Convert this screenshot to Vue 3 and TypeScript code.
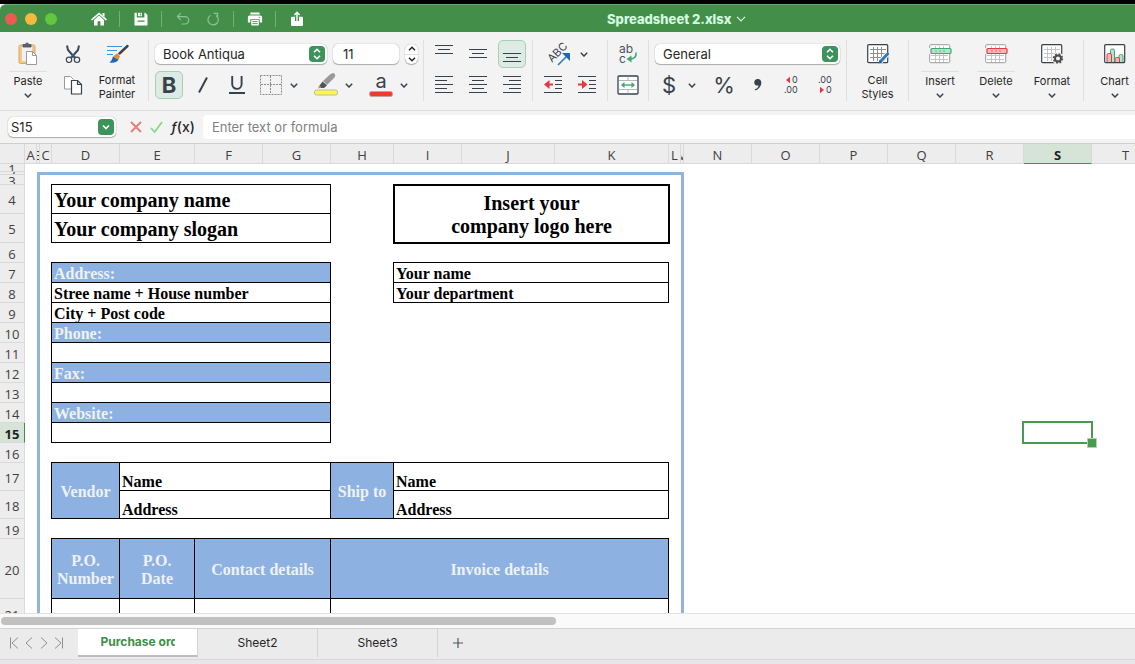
<script setup lang="ts">
import { ref } from 'vue'

interface Cell {
  text?: string
  span?: number
  rows?: number
  kind?: string
}
interface Row {
  n: number
  h: number
  cells: Cell[]
}

const columns: { id: string; w: number }[] = [
  { id: 'A', w: 12 },
  { id: 'B', w: 3 },
  { id: 'C', w: 12 },
  { id: 'D', w: 68 },
  { id: 'E', w: 75 },
  { id: 'F', w: 68 },
  { id: 'G', w: 68 },
  { id: 'H', w: 63 },
  { id: 'I', w: 68 },
  { id: 'J', w: 93 },
  { id: 'K', w: 114 },
  { id: 'L', w: 12 },
  { id: 'M', w: 3 },
  { id: 'N', w: 68 },
  { id: 'O', w: 68 },
  { id: 'P', w: 68 },
  { id: 'Q', w: 68 },
  { id: 'R', w: 68 },
  { id: 'S', w: 68 },
  { id: 'T', w: 68 },
]
const outer = ['N', 'O', 'P', 'Q', 'R', 'S', 'T']
const tableWidth = 25 + columns.reduce((sum, c) => sum + c.w, 0)

const gap: Cell = {}
const empty: Cell = { span: 8 }
const left = (text: string, kind = 'box'): Cell => ({ text, span: 4, kind })
const rest: Cell = { span: 4 }

const rows: Row[] = [
  { n: 1, h: 8, cells: [empty] },
  { n: 2, h: 3, cells: [] },
  { n: 3, h: 10, cells: [empty] },
  {
    n: 4,
    h: 29,
    cells: [
      left('Your company name', 'box large'),
      gap,
      { text: 'Insert your\ncompany logo here', span: 3, rows: 2, kind: 'logo large' },
    ],
  },
  { n: 5, h: 29, cells: [left('Your company slogan', 'box large'), gap] },
  { n: 6, h: 20, cells: [empty] },
  { n: 7, h: 20, cells: [left('Address:', 'box fill'), gap, { text: 'Your name', span: 3, kind: 'box' }] },
  { n: 8, h: 20, cells: [left('Stree name + House number'), gap, { text: 'Your department', span: 3, kind: 'box' }] },
  { n: 9, h: 20, cells: [left('City + Post code'), rest] },
  { n: 10, h: 20, cells: [left('Phone:', 'box fill'), rest] },
  { n: 11, h: 20, cells: [left(''), rest] },
  { n: 12, h: 20, cells: [left('Fax:', 'box fill'), rest] },
  { n: 13, h: 20, cells: [left(''), rest] },
  { n: 14, h: 20, cells: [left('Website:', 'box fill'), rest] },
  { n: 15, h: 20, cells: [left(''), rest] },
  { n: 16, h: 20, cells: [empty] },
  {
    n: 17,
    h: 28,
    cells: [
      { text: 'Vendor', rows: 2, kind: 'box fill mid' },
      { text: 'Name', span: 3, kind: 'box low' },
      { text: 'Ship to', rows: 2, kind: 'box fill mid' },
      { text: 'Name', span: 3, kind: 'box low' },
    ],
  },
  {
    n: 18,
    h: 28,
    cells: [
      { text: 'Address', span: 3, kind: 'box low' },
      { text: 'Address', span: 3, kind: 'box low' },
    ],
  },
  { n: 19, h: 20, cells: [empty] },
  {
    n: 20,
    h: 60,
    cells: [
      { text: 'P.O.\nNumber', kind: 'box fill mid' },
      { text: 'P.O.\nDate', kind: 'box fill mid' },
      { text: 'Contact details', span: 2, kind: 'box fill mid' },
      { text: 'Invoice details', span: 4, kind: 'box fill mid' },
    ],
  },
  { n: 21, h: 30, cells: [{ kind: 'box' }, { kind: 'box' }, { span: 2, kind: 'box' }, { span: 4, kind: 'box' }] },
]

const font = ref('Book Antiqua')
const size = ref('11')
const format = ref('General')
const address = ref('S15')
const formula = ref('')
const sheets = ['Purchase order', 'Sheet2', 'Sheet3']
const current = ref(0)
</script>

<template>
  <div class="app">
    <header class="titlebar">
      <div class="lights">
        <button class="light red" aria-label="Close"></button>
        <button class="light amber" aria-label="Minimize"></button>
        <button class="light green" aria-label="Zoom"></button>
      </div>
      <nav class="quick">
        <button aria-label="Home">
          <svg width="16" height="14" viewBox="0 0 16 14">
            <path d="M1 7.6 8 1.4l7 6.2" fill="none" stroke="#fff" stroke-width="1.5" stroke-linecap="round" />
            <path d="M11.5 1h2v4l-2-1.6zM3 8l5-4.4L13 8v5.4H9.4V9.2H6.6v4.2H3z" fill="#fff" />
          </svg>
        </button>
        <i></i>
        <button aria-label="Save">
          <svg width="14" height="14" viewBox="0 0 14 14">
            <path d="M0.5 0.8h2.3v4.6h7.6V0.8h0.8L13.5 3v10.5h-13z" fill="#fff" />
            <path d="M4 0.8h4v3.4H4z" fill="#fff" />
            <path d="M3.4 8.6h7.2v1.2H3.4zM6 10h5M6.2 1.5h1v2h-1z" fill="#438f4a" />
          </svg>
        </button>
        <i></i>
        <button aria-label="Undo">
          <svg width="14" height="14" viewBox="0 0 14 14" fill="none" stroke="#8fc294" stroke-width="1.2">
            <path d="M4.8 1.2 1.4 4.6 4.8 8M1.6 4.6H9a3.6 3.6 0 0 1 0 7.4H5.5" />
          </svg>
        </button>
        <button aria-label="Redo">
          <svg width="14" height="14" viewBox="0 0 14 14" fill="none" stroke="#8fc294" stroke-width="1.2">
            <path d="M4.6 3.2A5.2 5.2 0 1 0 10 3.4M7.6 1.4h4v4" />
          </svg>
        </button>
        <i></i>
        <button aria-label="Print">
          <svg width="16" height="14" viewBox="0 0 16 14">
            <path
              d="M3.4 0.6h9.2v2H3.4zM2.4 3.6h11.2a1.5 1.5 0 0 1 1.5 1.5v5.4h-2.4V7.2H3.3v3.3H0.9V5.1a1.5 1.5 0 0 1 1.5-1.5z"
              fill="#fff"
            />
            <rect x="4.2" y="8" width="7.6" height="5.4" rx="0.6" fill="#fff" />
            <path d="M5.4 9.6h5.2M5.4 11.6h5.2M11.8 5.4h1.4" stroke="#438f4a" stroke-width="0.9" />
          </svg>
        </button>
        <i></i>
        <button aria-label="Share">
          <svg width="14" height="16" viewBox="0 0 14 16">
            <path d="M2 5.8h10a1 1 0 0 1 1 1V14a1 1 0 0 1-1 1H2a1 1 0 0 1-1-1V6.8a1 1 0 0 1 1-1z" fill="#fff" />
            <path d="M5 5.6h4V10H5z" fill="#438f4a" />
            <path d="M7 10.4V1.6M4.4 4 7 1.3 9.6 4" fill="none" stroke="#fff" stroke-width="1.4" />
          </svg>
        </button>
      </nav>
      <button class="doc">
        <span>Spreadsheet 2.xlsx</span>
        <svg width="10" height="6" viewBox="0 0 10 6"><path d="M1 0.8 5 5 9 0.8" fill="none" stroke="#d9f5e0" stroke-width="1.2" /></svg>
      </button>
    </header>

    <div class="ribbon">
      <div class="group clip">
        <button class="big">
          <span class="pic lined">
            <svg width="20" height="24" viewBox="0 0 20 24">
              <rect x="1" y="3" width="16" height="18.5" rx="1.5" fill="#f3c88f" stroke="#d9a562" />
              <rect x="4" y="5" width="10" height="14" fill="#f1f1f1" />
              <path d="M5 5V2.5h2.5a1.5 1.5 0 0 1 3 0H13V5z" fill="#5a646b" stroke="#47525a" stroke-width="0.8" />
              <path d="M8.5 9.5h6l4 4v9h-10z" fill="#fff" stroke="#9a9a9a" />
              <path d="M14.5 9.5v4h4" fill="none" stroke="#9a9a9a" />
            </svg>
          </span>
          <span>Paste</span>
          <svg class="down" width="8" height="5" viewBox="0 0 8 5"><path d="M0.8 0.8 4 4 7.2 0.8" /></svg>
        </button>
        <div class="stack">
          <button class="tool" aria-label="Cut">
            <svg width="16" height="20" viewBox="0 0 16 20" fill="none">
              <path d="M2 1.5 3 6l7.500 8.500M14 1.500 13 6l-7.500 8.500" stroke="#3d4852" stroke-width="2" />
              <path d="M8 10.500 4.500 14M8 10.500l3.500 3.500" stroke="#2f78c2" stroke-width="1" />
              <circle cx="4" cy="15.800" r="2.700" stroke="#3d4852" stroke-width="1.200" fill="#f3f3f3" />
              <circle cx="12" cy="15.800" r="2.700" stroke="#3d4852" stroke-width="1.200" fill="#f3f3f3" />
            </svg>
          </button>
          <button class="tool" aria-label="Copy">
            <svg width="20" height="20" viewBox="0 0 20 20">
              <path d="M1.500 1.500h6l3 3v9.500h-9z" fill="#fff" stroke="#9a9a9a" />
              <path d="M8.500 5.500h6l4 4v9.500h-10z" fill="#fff" stroke="#37424d" stroke-width="1.200" />
              <path d="M14.500 5.500v4h4" fill="none" stroke="#37424d" stroke-width="1.200" />
            </svg>
          </button>
        </div>
        <button class="big">
          <span class="pic">
            <svg width="23" height="20" viewBox="0 0 23 20">
              <path d="M1 2.500h15M1 6.500h10M1 10.500h6" stroke="#3b93d6" stroke-width="1" />
              <path d="m13.500 9.500 8-7.500" stroke="#37424d" stroke-width="2.400" stroke-linecap="round" />
              <path d="M7 12.500 11 9.200l3 3-1.500 3.600z" fill="#ef8a2f" />
              <path d="M7 12.500c-0.800 2.500-1.500 4.500-3.500 6 4 0.600 7.500 0 9-2.700z" fill="#1f66b5" />
            </svg>
          </span>
          <span>Format Painter</span>
        </button>
      </div>

      <div class="group stack type">
        <div class="line">
          <label class="combo fontbox">
            <select v-model="font" aria-label="Font"><option>Book Antiqua</option></select>
            <svg class="knob" width="16" height="16" viewBox="0 0 16 16"><path d="M5 6.300 8 3.300l3 3M5 9.700l3 3 3-3" /></svg>
          </label>
          <input v-model="size" class="size" type="text" aria-label="Font size" />
          <div class="stepper">
            <button aria-label="Larger"><svg width="8" height="5" viewBox="0 0 8 5"><path d="M1 4.200 4 1.200l3 3" /></svg></button>
            <button aria-label="Smaller"><svg width="8" height="5" viewBox="0 0 8 5"><path d="M1 0.800l3 3 3-3" /></svg></button>
          </div>
        </div>
        <div class="line">
          <button class="tool on glyph bold">B</button>
          <button class="tool" aria-label="Italic">
            <svg width="12" height="18" viewBox="0 0 12 18"><path d="M10 1.500 2 16.500" stroke="#37424d" stroke-width="2" /></svg>
          </button>
          <button class="tool" aria-label="Underline">
            <svg width="18" height="20" viewBox="0 0 18 20" fill="none" stroke="#37424d" stroke-width="1.900">
              <path d="M4.200 1v8.200a4.700 4.700 0 0 0 9.400 0V1M1 18h16" />
            </svg>
          </button>
          <div class="split">
            <button class="tool" aria-label="Borders">
              <svg width="22" height="20" viewBox="0 0 22 20" fill="none" stroke="#8c8c8c" stroke-dasharray="2 1">
                <path d="M0.500 0.500h21v19H0.500zM10.500 1v18M1 9.500h20" />
              </svg>
            </button>
            <button class="more" aria-label="More borders"><svg class="down" width="8" height="5" viewBox="0 0 8 5"><path d="M0.800 0.800 4 4 7.200 0.800" /></svg></button>
          </div>
          <div class="split">
            <button class="tool" aria-label="Highlight">
              <svg width="26" height="26" viewBox="0 0 26 26">
                <path d="m10 9 7-6.500q4-3 5 0 0.500 2-1 3.500l-7 7z" fill="#999" />
                <path d="m9.500 9.500 4.500 4-3 2.500H6.500l-1-1z" fill="#4a545c" />
                <path d="m6.500 13.500 2 2-3.500 1z" fill="#ef8a2f" />
                <rect x="1.500" y="18" width="23" height="5" rx="2" fill="#fff748" stroke="#b9b9b9" />
              </svg>
            </button>
            <button class="more" aria-label="Highlight colours"><svg class="down" width="8" height="5" viewBox="0 0 8 5"><path d="M0.800 0.800 4 4 7.200 0.800" /></svg></button>
          </div>
          <div class="split">
            <button class="tool inked" aria-label="Font colour">
              <span>a</span>
              <svg width="24" height="6" viewBox="0 0 24 6"><rect x="0.500" y="0.500" width="23" height="5" rx="2" fill="#ef3b2c" stroke="#b9a5a3" /></svg>
            </button>
            <button class="more" aria-label="Font colours"><svg class="down" width="8" height="5" viewBox="0 0 8 5"><path d="M0.800 0.800 4 4 7.200 0.800" /></svg></button>
          </div>
        </div>
      </div>

      <div class="group stack">
        <div class="line">
          <button class="tool" aria-label="Align top"><svg class="bars" width="18" height="20" viewBox="0 0 18 20"><path d="M0 1.500h18M3 5.500h12M0 9.500h18" /></svg></button>
          <button class="tool" aria-label="Align middle"><svg class="bars" width="18" height="20" viewBox="0 0 18 20"><path d="M0 5.500h18M3 9.500h12M0 13.500h18" /></svg></button>
          <button class="tool on" aria-label="Align bottom"><svg class="bars" width="18" height="20" viewBox="0 0 18 20"><path d="M0 9.500h18M3 13.500h12M0 17.500h18" /></svg></button>
        </div>
        <div class="line">
          <button class="tool" aria-label="Align left"><svg class="bars" width="18" height="18" viewBox="0 0 18 18"><path d="M0 0.500h18M0 4.500h12M0 8.500h18M0 12.500h12M0 16.500h18" /></svg></button>
          <button class="tool" aria-label="Centre"><svg class="bars" width="18" height="18" viewBox="0 0 18 18"><path d="M0 0.500h18M3 4.500h12M0 8.500h18M3 12.500h12M0 16.500h18" /></svg></button>
          <button class="tool" aria-label="Align right"><svg class="bars" width="18" height="18" viewBox="0 0 18 18"><path d="M0 0.500h18M6 4.500h12M0 8.500h18M6 12.500h12M0 16.500h18" /></svg></button>
        </div>
      </div>

      <div class="group stack">
        <div class="split">
          <button class="tool wide" aria-label="Orientation">
            <svg width="32" height="26" viewBox="0 0 32 26">
              <text x="0" y="0" transform="translate(11 22) rotate(-45)" font-size="11" fill="#37424d">ABC</text>
              <path d="M17 24 27 14" stroke="#2f78c2" stroke-width="1.600" />
              <path d="M21 12h8v8z" fill="#1f66b5" />
            </svg>
          </button>
          <button class="more" aria-label="More orientations"><svg class="down" width="8" height="5" viewBox="0 0 8 5"><path d="M0.800 0.800 4 4 7.200 0.800" /></svg></button>
        </div>
        <div class="line">
          <button class="tool" aria-label="Decrease indent">
            <svg class="bars" width="18" height="18" viewBox="0 0 18 18"><path d="M0 0.500h18M11 4.500h7M11 8.500h7M11 12.500h7M0 16.500h18" /><path d="M4 8.500h5" stroke="#e5383f" stroke-width="2" /><path d="M0 8.500 5.500 4v9z" class="tip" /></svg>
          </button>
          <button class="tool" aria-label="Increase indent">
            <svg class="bars" width="18" height="18" viewBox="0 0 18 18"><path d="M0 0.500h18M11 4.500h7M11 8.500h7M11 12.500h7M0 16.500h18" /><path d="M0 8.500h5" stroke="#e5383f" stroke-width="2" /><path d="M9.500 8.500 4 4v9z" class="tip" /></svg>
          </button>
        </div>
      </div>

      <div class="group stack">
        <button class="tool" aria-label="Wrap text">
          <svg width="22" height="24" viewBox="0 0 22 24">
            <text x="2" y="11" font-size="12" fill="#4a545c">ab</text>
            <text x="2" y="21" font-size="12" fill="#4a545c">c</text>
            <path d="M19 10.500c0.500 4-1.500 6.500-6 6.500" fill="none" stroke="#3fa572" stroke-width="1.600" />
            <path d="m9.500 17 5-3.500v7z" fill="#3fa572" />
          </svg>
        </button>
        <button class="tool" aria-label="Merge cells">
          <svg width="22" height="20" viewBox="0 0 22 20" fill="none">
            <rect x="1" y="1" width="20" height="18" rx="1" fill="#fff" stroke="#37424d" stroke-width="1.300" />
            <path d="M2 5.500h18M2 14.500h18M11 1.500v4M11 14.500v4" stroke="#b5b5b5" />
            <path d="M6 10h10" stroke="#3fa572" stroke-width="1.400" />
            <path d="m4 10 3.500-3v6zM18 10l-3.500-3v6z" fill="#3fa572" />
          </svg>
        </button>
      </div>

      <div class="group stack">
        <label class="combo numbox">
          <select v-model="format" aria-label="Number format"><option>General</option></select>
          <svg class="knob" width="16" height="16" viewBox="0 0 16 16"><path d="M5 6.300 8 3.300l3 3M5 9.700l3 3 3-3" /></svg>
        </label>
        <div class="line">
          <div class="split">
            <button class="tool glyph">$</button>
            <button class="more" aria-label="Currencies"><svg class="down" width="8" height="5" viewBox="0 0 8 5"><path d="M0.800 0.800 4 4 7.200 0.800" /></svg></button>
          </div>
          <button class="tool glyph pct">%</button>
          <button class="tool" aria-label="Thousands separator">
            <svg width="12" height="16" viewBox="0 0 12 16"><path d="M5.700 2C8.600 2 9.600 4.300 9.300 6.600 8.900 10 6.500 12.500 3.200 13.600l-0.500-1.100C4.900 11.600 6.300 10.200 6.600 8.400 4.200 9 2.200 7.600 2.200 5.400 2.200 3.400 3.700 2 5.700 2z" fill="#37424d" /></svg>
          </button>
          <button class="tool" aria-label="Increase decimals">
            <svg width="16" height="20" viewBox="0 0 16 20" fill="#37424d" font-size="9"><path d="M2 5 6 1.800v6.400z" fill="#e5383f" /><text x="8" y="8">0</text><text x="0" y="18">.00</text></svg>
          </button>
          <button class="tool" aria-label="Decrease decimals">
            <svg width="16" height="20" viewBox="0 0 16 20" fill="#37424d" font-size="9"><path d="M6 15 2 11.800v6.400z" fill="#e5383f" /><text x="8" y="18">0</text><text x="0" y="8">.00</text></svg>
          </button>
        </div>
      </div>

      <div class="group">
        <button class="big narrow">
          <span class="pic">
            <svg width="22" height="20" viewBox="0 0 22 20" fill="none">
              <rect x="0.700" y="0.700" width="20" height="18" rx="1" fill="#fff" stroke="#37424d" stroke-width="1.200" />
              <path d="M3 5.500h16M3 9.500h16M3 13.500h12M6.500 3v14M10.500 3v14M14.500 3v10" stroke="#8f8f8f" />
              <path d="m13.500 17.500 7-7.500" stroke="#f3f3f3" stroke-width="5" />
              <path d="m14 17 6.500-7" stroke="#2f78c2" stroke-width="3" stroke-linecap="round" />
              <path d="m11.500 19.500 1-3.500 2.500 2.200z" fill="#1f66b5" />
            </svg>
          </span>
          <span>Cell Styles</span>
        </button>
      </div>

      <div class="group cells">
        <button class="big">
          <span class="pic lined">
            <svg width="23" height="20" viewBox="0 0 23 20" fill="none">
              <rect x="0.700" y="0.700" width="20" height="18" rx="1" fill="#fff" stroke="#9a9a9a" />
              <path d="M2 11.500h17M2 15.500h17M6.500 2v2M10.500 2v2M14.500 2v2M6.500 10v8M10.500 10v8M14.500 10v8" stroke="#c4c4c4" />
              <path d="M0 4h22v6H0z" fill="#f3f3f3" />
              <rect x="2" y="4.500" width="20" height="5" rx="1" fill="#b4e3c9" stroke="#3fa572" stroke-width="1.200" />
              <path d="M7 6.300v1.400M11 6.300v1.400M15 6.300v1.400" stroke="#3fa572" />
            </svg>
          </span>
          <span>Insert</span>
          <svg class="down" width="8" height="5" viewBox="0 0 8 5"><path d="M0.800 0.800 4 4 7.200 0.800" /></svg>
        </button>
        <button class="big">
          <span class="pic lined">
            <svg width="23" height="20" viewBox="0 0 23 20" fill="none">
              <rect x="0.700" y="0.700" width="20" height="18" rx="1" fill="#fff" stroke="#9a9a9a" />
              <path d="M2 11.500h17M2 15.500h17M6.500 2v2M10.500 2v2M14.500 2v2M6.500 10v8M10.500 10v8M14.500 10v8" stroke="#c4c4c4" />
              <path d="M0 4h22v6H0z" fill="#f3f3f3" />
              <rect x="2" y="4.500" width="20" height="5" rx="1" fill="#f5b9c0" stroke="#e5383f" stroke-width="1.200" />
              <path d="M7 6.300v1.400M11 6.300v1.400M15 6.300v1.400" stroke="#e5383f" />
            </svg>
          </span>
          <span>Delete</span>
          <svg class="down" width="8" height="5" viewBox="0 0 8 5"><path d="M0.800 0.800 4 4 7.200 0.800" /></svg>
        </button>
        <button class="big">
          <span class="pic">
            <svg width="23" height="20" viewBox="0 0 23 20" fill="none">
              <rect x="0.700" y="0.700" width="20" height="18" rx="1" fill="#fff" stroke="#37424d" stroke-width="1.200" />
              <path d="M3 5.500h16M3 9.500h16M3 13.500h12M6.500 3v14M10.500 3v14M14.500 3v14" stroke="#c4c4c4" />
              <circle cx="17" cy="14.500" r="6" fill="#f3f3f3" />
              <circle cx="17" cy="14.500" r="3" stroke="#4a4a4a" stroke-width="2" />
              <circle cx="17" cy="14.500" r="4.400" stroke="#4a4a4a" stroke-width="1.600" stroke-dasharray="1.730 1.730" />
            </svg>
          </span>
          <span>Format</span>
          <svg class="down" width="8" height="5" viewBox="0 0 8 5"><path d="M0.800 0.800 4 4 7.200 0.800" /></svg>
        </button>
      </div>

      <div class="group">
        <button class="big narrow">
          <span class="pic">
            <svg width="22" height="20" viewBox="0 0 22 20">
              <rect x="0.700" y="0.700" width="20" height="18" rx="1" fill="#fff" stroke="#37424d" stroke-width="1.200" />
              <path d="M6.500 18V6.500a1.500 1.500 0 0 1 1.500-1.500h1a1.500 1.500 0 0 1 1.500 1.500V18M15 18v-6a1.500 1.500 0 0 1 1.500-1.500h1A1.500 1.500 0 0 1 19 12v6" fill="#b4e3c9" stroke="#3fa572" />
              <path d="M3 18v-7a1.500 1.500 0 0 1 1.500-1.500h1.500a1.500 1.500 0 0 1 1.500 1.500v7M11 18v-3a1.500 1.500 0 0 1 1.500-1.500H14a1.500 1.500 0 0 1 1.500 1.500v3" fill="#f5b9c0" stroke="#e5383f" />
            </svg>
          </span>
          <span>Chart</span>
          <svg class="down" width="8" height="5" viewBox="0 0 8 5"><path d="M0.800 0.800 4 4 7.200 0.800" /></svg>
        </button>
      </div>
    </div>

    <div class="formulabar">
      <label class="combo namebox">
        <input v-model="address" type="text" aria-label="Cell address" />
        <svg class="knob" width="16" height="16" viewBox="0 0 16 16"><path d="M5 6.500l3 3 3-3" /></svg>
      </label>
      <button aria-label="Cancel"><svg width="12" height="12" viewBox="0 0 12 12"><path d="m1 1 10 10M11 1 1 11" stroke="#ee7b76" stroke-width="1.800" /></svg></button>
      <button aria-label="Accept"><svg width="13" height="12" viewBox="0 0 13 12"><path d="m1 7 3.600 4L12 1" fill="none" stroke="#8bd68b" stroke-width="1.800" /></svg></button>
      <button class="fx"><i>ƒ</i>(x)</button>
      <input v-model="formula" class="entry" type="text" placeholder="Enter text or formula" aria-label="Formula" />
    </div>

    <main class="viewport">
      <table class="sheet" :style="{ width: tableWidth + 'px' }">
        <colgroup>
          <col :style="{ width: '25px' }" />
          <col v-for="c in columns" :key="c.id" :style="{ width: c.w + 'px' }" />
        </colgroup>
        <thead>
          <tr>
            <th></th>
            <th v-for="c in columns" :key="c.id" scope="col" :class="{ picked: c.id === 'S' }"><div>{{ c.id }}</div></th>
          </tr>
        </thead>
        <tbody>
          <tr v-for="r in rows" :key="r.n" :style="{ height: r.h + 'px' }">
            <th scope="row" :class="{ picked: r.n === 15 }"><div :style="{ height: r.h - 1 + 'px' }">{{ r.n }}</div></th>
            <td></td>
            <template v-if="r.n === 2"><td class="top" colspan="12"></td></template>
            <template v-else>
              <td :class="{ frame: r.n > 2 }"></td>
              <td></td>
              <td v-for="(c, i) in r.cells" :key="i" :colspan="c.span ?? 1" :rowspan="c.rows ?? 1" :class="c.kind">
                <span v-if="c.text">{{ c.text }}</span>
              </td>
              <td></td>
              <td :class="{ frame: r.n > 2 }"></td>
            </template>
            <td v-for="id in outer" :key="id" :class="{ active: r.n === 15 && id === 'S' }"></td>
          </tr>
        </tbody>
      </table>
    </main>

    <div class="scroll"><div class="thumb"></div></div>

    <footer class="tabs">
      <div class="pager">
        <button aria-label="First sheet"><svg width="10" height="12" viewBox="0 0 10 12"><path d="M1.500 0.500v11M9 0.500 3 6l6 5.500" /></svg></button>
        <button aria-label="Previous sheet"><svg width="10" height="12" viewBox="0 0 10 12"><path d="M8 0.500 2 6l6 5.500" /></svg></button>
        <button aria-label="Next sheet"><svg width="10" height="12" viewBox="0 0 10 12"><path d="M2 0.500 8 6l-6 5.500" /></svg></button>
        <button aria-label="Last sheet"><svg width="10" height="12" viewBox="0 0 10 12"><path d="M1 0.500 7 6l-6 5.500M8.500 0.500v11" /></svg></button>
      </div>
      <button v-for="(s, i) in sheets" :key="s" class="tab" :class="{ current: i === current }" @click="current = i">
        <span>{{ s }}</span>
      </button>
      <button class="add" aria-label="Add sheet"><svg width="10" height="10" viewBox="0 0 10 10"><path d="M5 0v10M0 5h10" stroke="#4a5a60" stroke-width="1.200" /></svg></button>
    </footer>
    <div class="edge"></div>
  </div>
</template>

<style>
body {
  overflow: hidden;
}
</style>

<style scoped>
.app {
  display: flex;
  flex-direction: column;
  height: 100vh;
  overflow: hidden;
  background: #fff;
  border-top: 4px solid #000;
  box-sizing: border-box;
  font: 13px/16px Inter, 'Liberation Sans', sans-serif;
  color: #262626;
}
.app * {
  box-sizing: border-box;
}
button,
input,
select {
  font: inherit;
  color: inherit;
  border: 0;
  background: none;
  padding: 0;
  margin: 0;
  outline: 0;
}
button {
  display: flex;
  align-items: center;
  justify-content: center;
}
svg {
  display: block;
  flex: none;
}
svg text {
  font-family: Inter, 'Liberation Sans', sans-serif;
}

.titlebar {
  flex: none;
  display: flex;
  align-items: center;
  height: 28px;
  padding-left: 5px;
  background: #438f4a;
  border-top: 1px solid #68ad70;
  border-top-left-radius: 6px;
}
.titlebar::after {
  content: '';
  flex: 3 1 0;
}
.lights {
  display: flex;
  gap: 8px;
}
.light {
  width: 12px;
  height: 12px;
  border-radius: 50%;
}
.red {
  background: #ed5a52;
}
.amber {
  background: #f7b83b;
}
.green {
  background: #62c73d;
}
.quick {
  flex: 4 1 0;
  display: flex;
  align-items: center;
  gap: 10px;
  margin-left: 32px;
}
.quick button {
  width: 20px;
  height: 20px;
}
.quick i {
  width: 1px;
  height: 16px;
  margin-right: 1px;
  background: #72b07a;
}
.doc {
  flex: none;
  gap: 5px;
  font-weight: 800;
  color: #d5fbe0;
}

.ribbon {
  flex: none;
  display: flex;
  height: 79px;
  padding-top: 8px;
  background: #f3f3f3;
  border-bottom: 1px solid #dcdcdc;
  overflow: hidden;
}
.group {
  display: flex;
  flex: none;
  height: 61px;
  padding: 0 6px;
  border-left: 1px solid #dfdfdf;
}
.clip {
  gap: 3px;
  padding: 0 3px 0 0;
  border-left: 0;
}
.clip .big + .stack {
  margin-right: -1px;
}
.type {
  padding-right: 5px;
}
.stack {
  display: flex;
  flex-direction: column;
  gap: 3px;
}
.line,
.split {
  display: flex;
  align-items: center;
  height: 28px;
}
.line {
  gap: 6px;
}
.split + .split,
.split + .pct {
  margin-left: 3px;
}
.tool {
  flex: none;
  width: 28px;
  height: 28px;
}
.wide {
  width: 36px;
}
.more {
  width: 18px;
  height: 28px;
}
.on {
  background: #dcebe3;
  border: 1px solid #a3d0b6;
  border-radius: 5px;
}
.glyph {
  font-size: 22px;
  line-height: 24px;
  color: #37424d;
}
.bold {
  font-weight: 700;
}
.inked {
  flex-direction: column;
  justify-content: flex-start;
  font-size: 20px;
  line-height: 20px;
  color: #37424d;
}
.down {
  fill: none;
  stroke: #37424d;
  stroke-width: 1.5;
}
.bars {
  fill: none;
  stroke: #37424d;
}
.bars .tip {
  fill: #e5383f;
  stroke: none;
}
.combo {
  display: flex;
  align-items: center;
  padding-right: 2px;
  height: 20px;
  background: #fff;
  border-radius: 5px;
  box-shadow: 0 0 1px #0006, 0 1px 1px #0004;
}
.combo select,
.combo input {
  flex: 1;
  min-width: 0;
  appearance: none;
}
.combo select {
  padding-left: 8px;
}
.knob {
  background: #3c945b;
  border-radius: 4px;
  fill: none;
  stroke: #fff;
  stroke-width: 1.6;
}
.fontbox {
  width: 172px;
}
.numbox {
  width: 185px;
  margin: 4px 0;
}
.size {
  width: 66px;
  height: 20px;
  padding-left: 10px;
  background: #fff;
  border-radius: 5px;
  box-shadow: 0 0 1px #0006, 0 1px 1px #0004;
}
.stepper {
  width: 13px;
  height: 20px;
  display: flex;
  flex-direction: column;
  background: #fff;
  border-radius: 6px;
  box-shadow: 0 0 1px #0006, 0 1px 1px #0004;
  stroke: #262626;
  stroke-width: 1.5;
  fill: none;
}
.stepper button {
  flex: 1;
}
.stepper button + button {
  border-top: 1px solid #ddd;
}
.big {
  flex-direction: column;
  justify-content: flex-start;
  width: 56px;
  font-size: 11px;
  line-height: 14px;
}
.narrow {
  width: 49px;
}
.cells {
  gap: 4px;
  padding: 0 5px;
}
.cells .big {
  width: 52px;
}
.pic {
  display: flex;
  align-items: center;
  justify-content: center;
  width: 38px;
  height: 32px;
  margin-bottom: 2px;
  padding-bottom: 3px;
  border-bottom: 1px solid transparent;
}
.lined {
  border-color: #dfdfdf;
}
.big .down {
  margin-top: 5px;
}

.formulabar {
  flex: none;
  display: flex;
  align-items: center;
  height: 33px;
  padding: 0 0 1px 8px;
  background: #f3f3f3;
  border-bottom: 1px solid #cfcfcf;
}
.namebox {
  width: 108px;
  padding-left: 3px;
  margin-right: 14px;
}
.formulabar button {
  margin-right: 8px;
}
.fx {
  font-size: 14px;
  font-weight: 500;
}
.entry {
  flex: 1;
  height: 24px;
  padding-left: 9px;
  background: #fff;
  border-radius: 4px 0 0 4px;
}
.entry::placeholder {
  color: #808080;
}

.viewport {
  flex: 1;
  min-height: 0;
  overflow: hidden;
}
.sheet {
  table-layout: fixed;
  border-collapse: separate;
  border-spacing: 0;
}
.sheet th,
.sheet td {
  padding: 0;
}
.sheet th {
  background: #ededed;
  border-right: 1px solid #d9d9d9;
  border-bottom: 1px solid #d9d9d9;
  font: 13px/18px 'Open Sans', 'Noto Sans', sans-serif;
  color: #404040;
}
.sheet th div {
  display: flex;
  align-items: center;
  justify-content: center;
  overflow: hidden;
  padding-top: 2px;
}
.sheet thead th {
  height: 20px;
}
.sheet thead th div {
  height: 19px;
}
.sheet th.picked {
  background: #d6e3d7;
  font-weight: 700;
  color: #1f1f1f;
}
.sheet thead .picked {
  border-bottom-color: #438f4a;
}
.sheet tbody .picked {
  border-right-color: #438f4a;
}
.sheet td {
  font: bold 16px/18px 'Liberation Serif', serif;
  line-height: 0;
  color: #000;
  vertical-align: middle;
}
.sheet td span {
  display: block;
  line-height: 17px;
  white-space: pre-line;
}
.box {
  border-right: 1px solid #000;
  border-bottom: 1px solid #000;
  box-shadow: -1px 0 #000, 0 -1px #000, -1px -1px #000;
}
.sheet .box {
  padding: 2px 0 0 2px;
}
.sheet .large {
  padding-top: 2px;
  font-size: 20px;
}
.sheet .large span {
  line-height: 23px;
}
.logo {
  text-align: center;
  box-shadow: 0 0 0 1px #000, inset 0 0 0 1px #000;
}
.sheet .fill {
  background: #8db1e1;
  color: #eef1f5;
}
.sheet .mid {
  padding: 2px 0 0;
  text-align: center;
}
.sheet .mid span {
  line-height: 18px;
}
.sheet .low {
  vertical-align: bottom;
}
.frame {
  background: #95b3d9;
}
.top {
  background: #8db4e2;
}
.active {
  position: relative;
}
.active::before {
  content: '';
  position: absolute;
  inset: -2px -1px -1px -2px;
  border: 2px solid #4b9850;
}
.active::after {
  content: '';
  position: absolute;
  right: -5px;
  bottom: -5px;
  width: 8px;
  height: 8px;
  background: #4b9850;
  border: 1px solid #a9d5b0;
}

.scroll {
  flex: none;
  height: 15px;
  padding: 3px 1px;
  background: #fafafa;
  border-top: 1px solid #e2e2e2;
}
.thumb {
  width: 49%;
  height: 8px;
  background: #c1c1c1;
  border-radius: 4px;
}
.tabs {
  flex: none;
  display: flex;
  height: 31px;
  padding-bottom: 2px;
  background: #ebebeb;
  border-top: 1px solid #d3d3d3;
  font-size: 12px;
}
.pager {
  display: flex;
  align-items: center;
  gap: 5px;
  width: 78px;
  padding-left: 9px;
  fill: none;
  stroke: #8b8f93;
}
.tab {
  width: 120px;
  border-right: 1px solid #d3d3d3;
}
.tab span {
  max-width: 74px;
  overflow: hidden;
  white-space: nowrap;
}
.current {
  background: #fff;
  border-bottom: 2px solid #bdbdbd;
  font-weight: 700;
  color: #3d8e46;
}
.add {
  width: 39px;
}
.edge {
  flex: none;
  height: 5px;
  background: #e9e6ea;
  border-top: 1px solid #dad8da;
}
</style>
